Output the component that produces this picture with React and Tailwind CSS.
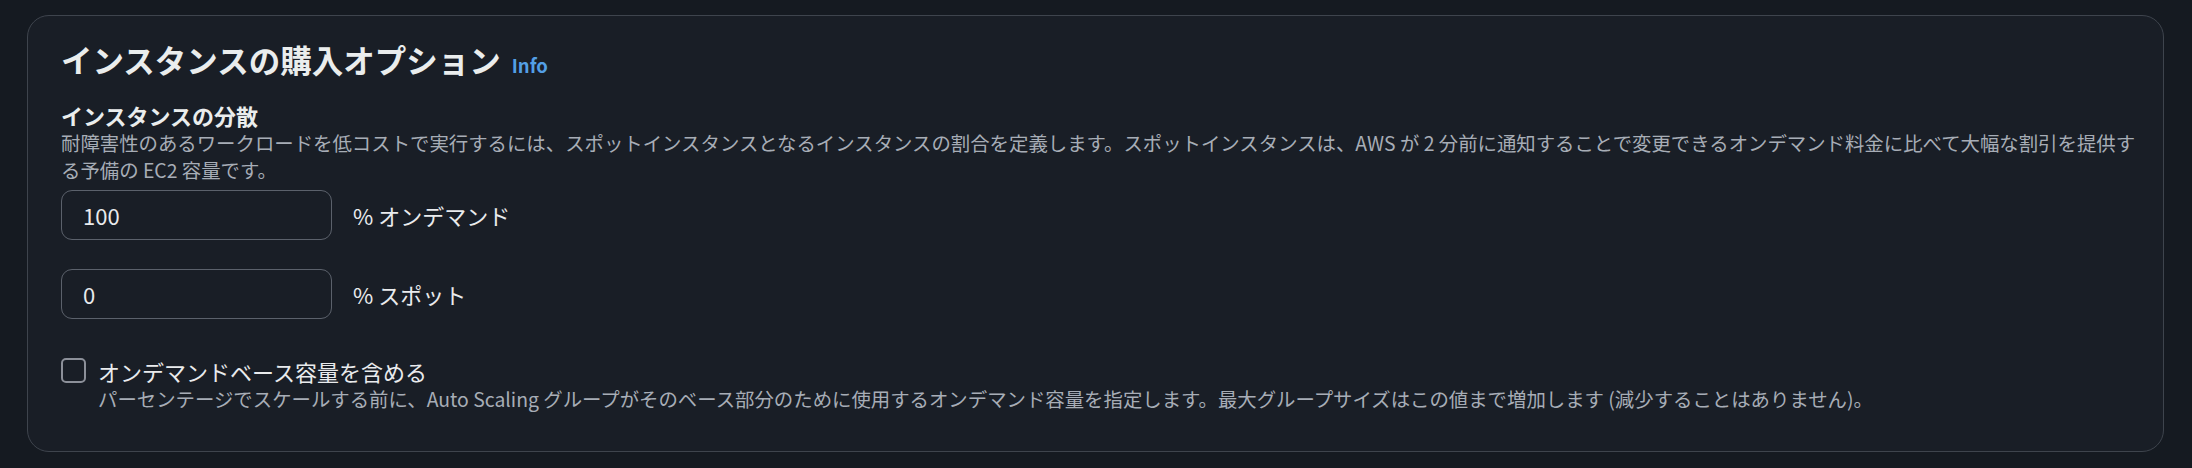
import React, { useState } from 'react';

const font = { fontFamily: '"Noto Sans CJK JP", "Noto Sans", sans-serif' };

const PercentField = ({ value, label }) => (
  <div className="flex items-center gap-[21px]">
    <input
      type="text"
      defaultValue={value}
      className="w-[271px] h-[50px] rounded-[11px] border border-[#5b616b] bg-transparent pl-[21px] text-[22px] text-[#e9ebed] outline-none"
    />
    <span className="text-[22px] leading-[28px] text-[#e9ebed]">{label}</span>
  </div>
);

const App = () => {
  const [includeBase, setIncludeBase] = useState(false);

  return (
    <div className="min-h-[468px] w-full bg-[#151a21] pl-[27px] pr-[28px] pt-[15px]" style={font}>
      <div className="rounded-[22px] border border-[#3e444d] bg-[#191e26] pl-[33px] pr-[24px] pt-[23px] pb-[39px]">
        {/* header */}
        <div className="flex items-baseline gap-[11px]">
          <h2 className="text-[31.5px] leading-[40px] font-bold text-[#eaeded]">インスタンスの購入オプション</h2>
          <a className="text-[18.5px] font-bold text-[#539fe5]">Info</a>
        </div>

        <div className="mt-[21px]">
          <h3 className="text-[22px] leading-[28px] font-bold text-[#eaeded]">インスタンスの分散</h3>
          <p className="text-[19.4px] leading-[27px] text-[#a7adb6]">
            <span className="block whitespace-nowrap">
              耐障害性のあるワークロードを低コストで実行するには、スポットインスタンスとなるインスタンスの割合を定義します。スポットインスタンスは、AWS が 2 分前に通知することで変更できるオンデマンド料金に比べて大幅な割引を提供す
            </span>
            <span className="block">る予備の EC2 容量です。</span>
          </p>
        </div>

        <div className="mt-[7px] flex flex-col gap-[29px]">
          <PercentField value="100" label="% オンデマンド" />
          <PercentField value="0" label="% スポット" />
        </div>

        <div className="mt-[38px] flex gap-[12px]">
          <button
            onClick={() => setIncludeBase(!includeBase)}
            className="mt-[1px] w-[25px] h-[25px] shrink-0 rounded-[5px] border-2 border-[#8c9099] bg-transparent"
          />
          <div>
            <div className="text-[22px] leading-[28px] text-[#e9ebed]">オンデマンドベース容量を含める</div>
            <div className="text-[19.4px] leading-[27px] text-[#a7adb6]">
              パーセンテージでスケールする前に、Auto Scaling グループがそのベース部分のために使用するオンデマンド容量を指定します。最大グループサイズはこの値まで増加します (減少することはありません)。
            </div>
          </div>
        </div>
      </div>
    </div>
  );
};

export default App;
